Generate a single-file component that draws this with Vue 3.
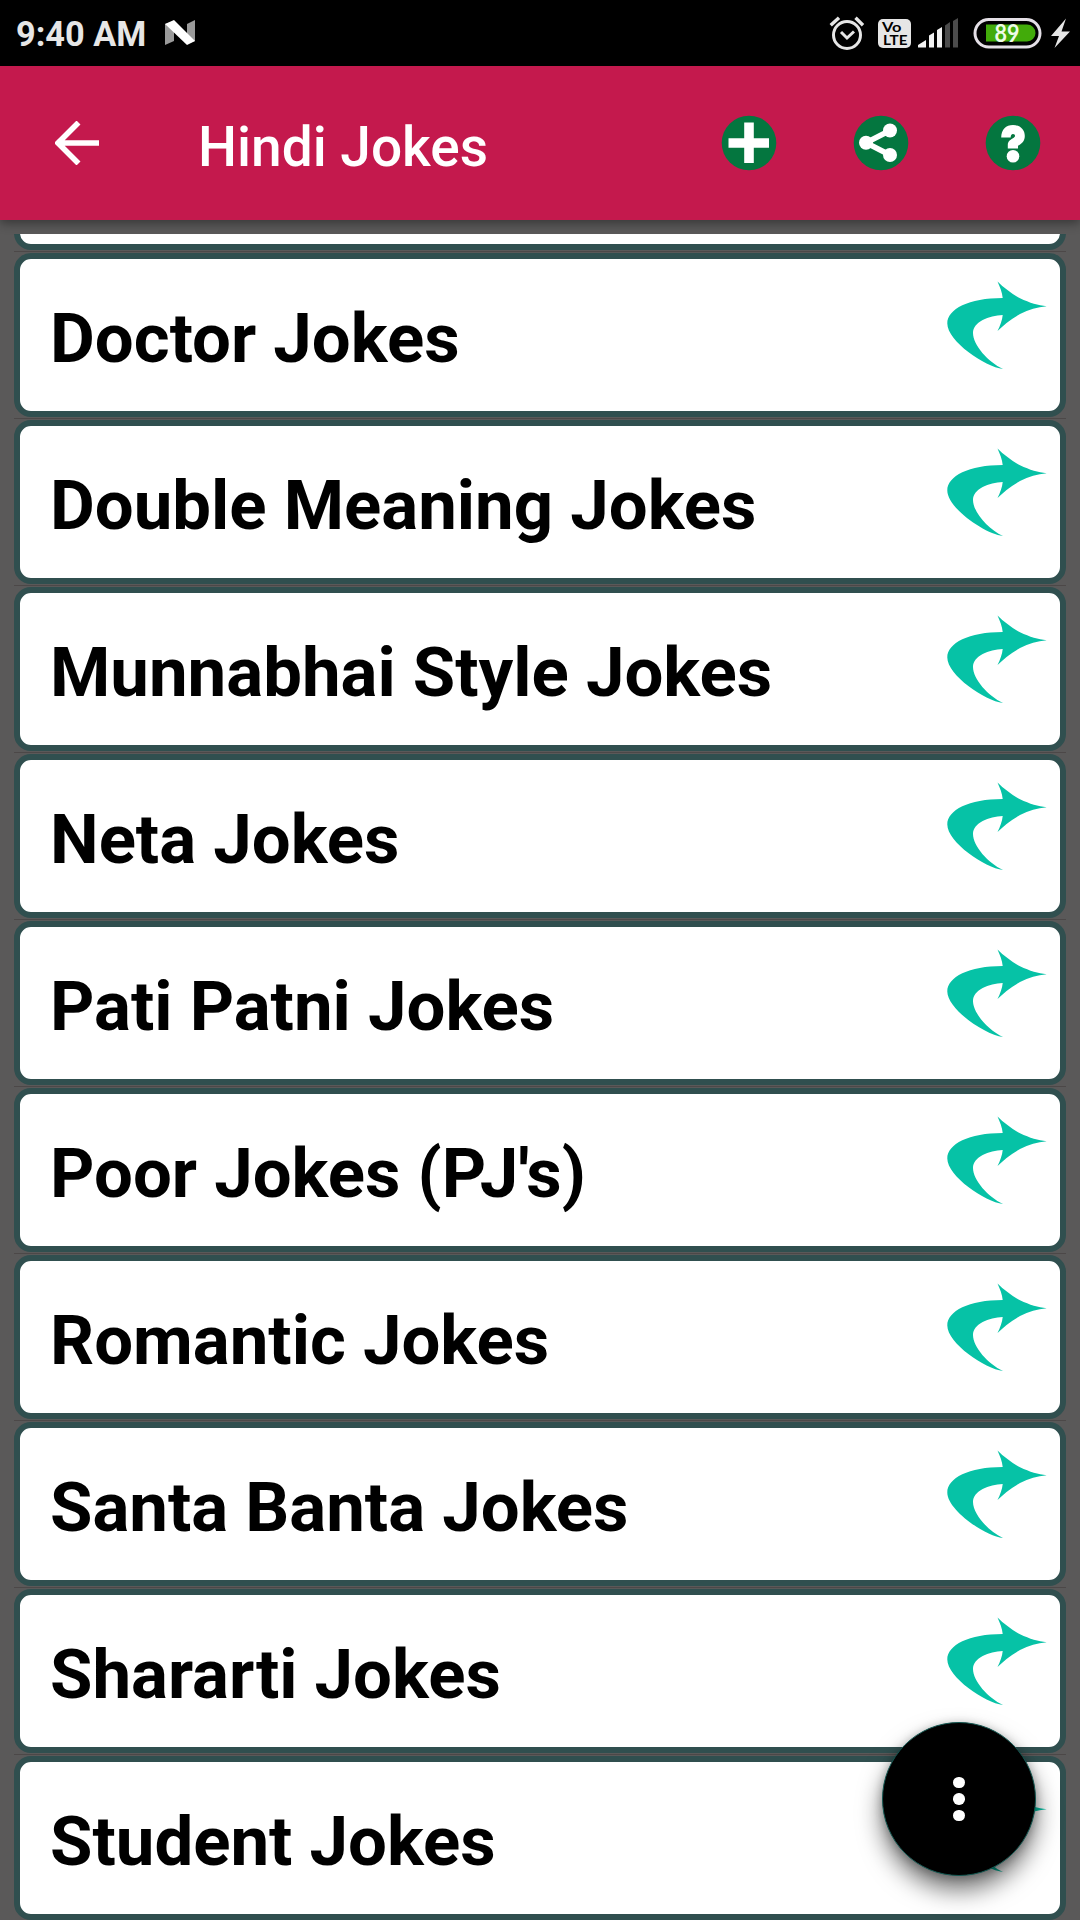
<script setup>
const categories = [
  'Doctor Jokes',
  'Double Meaning Jokes',
  'Munnabhai Style Jokes',
  'Neta Jokes',
  'Pati Patni Jokes',
  "Poor Jokes (PJ's)",
  'Romantic Jokes',
  'Santa Banta Jokes',
  'Shararti Jokes',
  'Student Jokes',
]
</script>

<template>
  <div class="screen">
    <div class="status">
      <span class="clock">9:40 AM</span>
      <svg class="nougat" width="31" height="26" viewBox="0 0 31 26">
        <path d="M0 4L9 1V21L0 25Z" fill="#9a9a9a" />
        <path d="M22 4L30 0V21L22 24Z" fill="#9a9a9a" />
        <path d="M0 4L9 0L30 21L22 25Z" fill="#fff" />
      </svg>
      <span class="spacer"></span>
      <svg class="indicators" width="250" height="40" viewBox="0 0 250 40">
        <g fill="none" stroke="#e6e6e6" stroke-width="3">
          <circle cx="17" cy="23" r="13.5" />
          <path d="M11 20L17 26L24 19.5" />
          <path d="M0.7 13.3L9 5.7M25.5 5.7L33 13.3" stroke-width="3.4" />
        </g>
        <rect x="48" y="7" width="33" height="29" rx="5" fill="#e6e6e6" />
        <g class="volte">
          <text x="52" y="19.5" textLength="19.5" lengthAdjust="spacingAndGlyphs">Vo</text>
          <text x="53" y="32.8" textLength="24.5" lengthAdjust="spacingAndGlyphs">LTE</text>
        </g>
        <path d="M88 35.5V33L96 28V35.5ZM99 35.5V23.5L104 20.5V35.5ZM107 35.5V18L112 15V35.5Z" fill="#f2f2f2" />
        <path d="M115 35.5V13.5L120 10V35.5ZM123 35.5V9L128 6V35.5Z" fill="#4b4b4b" />
        <rect x="145" y="7.500" width="65" height="27.500" rx="13.750" fill="none" stroke="#e4dfe6" stroke-width="3" />
        <path d="M156 12.500H197A8.500 8.500 0 0 1 197 29.500H156Z" fill="#42ab0a" />
        <text class="battery" x="164.500" y="29.500" textLength="25" lengthAdjust="spacingAndGlyphs">89</text>
        <path d="M236 6.500L221 24H229L224.500 36L240 19.500H231.500Z" fill="#e6e6e6" />
      </svg>
    </div>

    <header class="toolbar">
      <svg class="back" width="44" height="44" viewBox="0 0 44 44">
        <path d="M23.500 1.500L3 22L23.500 42.500M3 22H44" fill="none" stroke="#fff" stroke-width="5.600" />
      </svg>
      <h1>Hindi Jokes</h1>
      <div class="actions">
        <svg width="56" height="56" viewBox="0 0 56 56">
          <circle cx="28" cy="28" r="27.300" fill="#04763f" />
          <path d="M28 7.500V48M7.500 28H48" stroke="#fff" stroke-width="9.600" />
        </svg>
        <svg width="56" height="56" viewBox="0 0 56 56">
          <circle cx="28" cy="28" r="27.300" fill="#04763f" />
          <path d="M37 15.500L13 27.700L37 40" fill="none" stroke="#fff" stroke-width="5.500" />
          <g fill="#fff">
            <circle cx="37" cy="15.500" r="7" />
            <circle cx="13" cy="27.700" r="7" />
            <circle cx="37" cy="40" r="7" />
          </g>
        </svg>
        <svg width="56" height="56" viewBox="0 0 56 56">
          <circle cx="28" cy="28" r="27.300" fill="#04763f" />
          <path d="M16.200 22.500C16.200 14.500 21 10 28 10C35 10 39.800 14.500 39.800 21C39.800 26 37 28.500 33 30.800V33.600H22.800V30C22.800 26.500 25 25 27.500 23.500C29.500 22.300 30 21.800 30 20.800C30 19.700 29.200 19 28 19C26.500 19 25.700 20.300 25.700 22.500Z" fill="#fff" />
          <circle cx="28" cy="41.300" r="6.300" fill="#fff" />
        </svg>
      </div>
    </header>

    <main class="list">
      <div class="card"></div>
      <template v-for="name in categories" :key="name">
        <div class="divider"></div>
        <div class="card">
          <span class="label">{{ name }}</span>
          <svg class="arrow" width="100" height="90" viewBox="0 0 100 90">
            <path d="M50.500 0.500C57 7 66 13.500 73 17.300C83 22 91 24.500 99.700 25.200C90 26 82 28.500 73 33C64 38 56 44.500 50.500 50C53 45 55.300 39 55.700 33.900C42 34.500 26 40.500 26 52C26 64 41 81 56 88C38 86 0.300 60 0.300 42.500C0.300 28 22 17 55.700 17C55.300 11.500 53 6 50.500 0.500Z" fill="#06c2a6" />
          </svg>
        </div>
      </template>
    </main>

    <button class="fab" aria-label="More">
      <i></i><i></i><i></i>
    </button>
  </div>
</template>

<style>
body {
  margin: 0;
}
</style>

<style scoped>
.screen {
  position: relative;
  display: flex;
  flex-direction: column;
  width: 1080px;
  height: 1920px;
  overflow: hidden;
  background: #5a5959;
  font-family: Roboto, sans-serif;
}
.status {
  display: flex;
  flex: none;
  height: 66px;
  box-sizing: border-box;
  padding: 0 0 0 16px;
  background: #000;
}
.clock {
  width: 129px;
  font-size: 34.300px;
  line-height: 68px;
  font-weight: 700;
  color: #e6e6e6;
  white-space: nowrap;
}
.nougat {
  margin: 20px 0 0 20px;
}
.spacer {
  flex: 1;
}
.indicators {
  margin-top: 12px;
  overflow: visible;
}
.volte text {
  font: 700 13px Lato, sans-serif;
  fill: #000;
}
.battery {
  font: 700 24px Lato, sans-serif;
  fill: #eefbe8;
}
.toolbar {
  display: flex;
  flex: none;
  align-items: center;
  height: 154px;
  box-sizing: border-box;
  padding: 0 38.700px 1px 55px;
  background: #c4194d;
  box-shadow: 0 3px 10px rgba(0, 0, 0, 0.4);
  z-index: 1;
}
.back {
  flex: none;
  margin-top: 1px;
}
h1 {
  flex: 1;
  margin: 9px 0 0 99px;
  font-size: 55px;
  line-height: 64px;
  font-weight: 500;
  color: #fff;
  white-space: nowrap;
}
.actions {
  display: flex;
  gap: 76px;
}
.list {
  display: flex;
  flex: 1;
  flex-direction: column;
  justify-content: flex-end;
  min-height: 0;
  margin: 14px 14px 0;
  overflow: hidden;
}
.card {
  display: flex;
  flex: none;
  justify-content: space-between;
  height: 164px;
  box-sizing: border-box;
  padding: 0 13px 0 30px;
  border: 6px solid #304f4f;
  border-radius: 17px;
  background: #fff;
}
.divider {
  flex: none;
  height: 1px;
  margin: 1px 0;
  background: #4c4848;
}
.label {
  margin-top: 39px;
  font-size: 68.950px;
  line-height: 81px;
  font-weight: 700;
  color: #000;
  white-space: nowrap;
}
.arrow {
  flex: none;
  margin-top: 22px;
}
.fab {
  position: absolute;
  left: 882px;
  top: 1722px;
  z-index: 2;
  display: flex;
  flex-direction: column;
  align-items: center;
  justify-content: center;
  gap: 5px;
  width: 154px;
  height: 154px;
  padding: 0;
  border: 1px solid #125650;
  border-radius: 50%;
  background: #000;
  box-shadow: 0 14px 24px rgba(0, 0, 0, 0.55), 0 2px 10px rgba(0, 0, 0, 0.25);
}
.fab i {
  width: 11.500px;
  height: 11.500px;
  border-radius: 50%;
  background: #fff;
}
</style>
